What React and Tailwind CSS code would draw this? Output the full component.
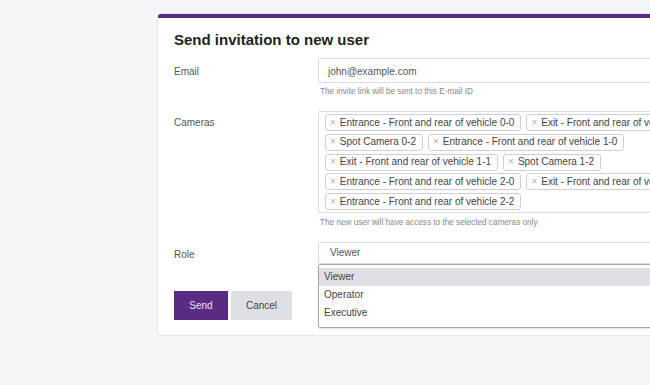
import React from "react";

const cameras = [
  "Entrance - Front and rear of vehicle 0-0",
  "Exit - Front and rear of vehicle 0-1",
  "Spot Camera 0-2",
  "Entrance - Front and rear of vehicle 1-0",
  "Exit - Front and rear of vehicle 1-1",
  "Spot Camera 1-2",
  "Entrance - Front and rear of vehicle 2-0",
  "Exit - Front and rear of vehicle 2-1",
  "Entrance - Front and rear of vehicle 2-2",
];

function Chip({ label }) {
  return (
    <div className="flex h-[17px] items-center rounded-[3px] border border-[#cfcfcf] bg-white pl-[4px] pr-[6px] text-[10px] leading-none text-[#444]">
      <span className="mr-[4px] text-[10px] text-[#b0b0b0]">×</span>
      <span className="whitespace-nowrap">{label}</span>
    </div>
  );
}

export default function App() {
  return (
    <div
      className="relative h-[385px] w-[650px] overflow-hidden bg-[#f5f6f8]"
      style={{ fontFamily: '"Liberation Sans", Arial, sans-serif' }}
    >
      <div className="ml-[158px] mt-[14px] w-[610px] rounded-[3px] border-t-4 border-[#5a2b82] bg-white shadow-[0_0_0_1px_#e6e7ea] px-[16px] pb-[15px] pt-[13px]">
        <h1 className="text-[15px] font-bold leading-[18px] text-[#222]">
          Send invitation to new user
        </h1>

        {/* Email */}
        <div className="mt-[9px] grid grid-cols-[144px_1fr]">
          <div className="flex items-center pt-[1px] text-[10px] text-[#555]">Email</div>
          <div className="flex h-[25px] items-center rounded-[2px] border border-[#dcdcdc] px-[9px] pt-[1px] text-[10px] text-[#555]">
            john@example.com
          </div>
          <div />
          <div className="mt-[3px] pl-[2px] text-[8.2px] leading-[12px] text-[#888]">
            The invite link will be sent to this E-mail ID
          </div>
        </div>

        {/* Cameras */}
        <div className="mt-[13px] grid grid-cols-[144px_1fr]">
          <div className="pt-[6px] text-[10px] leading-[12px] text-[#555]">Cameras</div>
          <div className="flex flex-wrap gap-x-[5px] gap-y-[2.75px] rounded-[2px] border border-[#dcdcdc] px-[6px] pb-[2px] pt-[2px]">
            {cameras.map((c) => (
              <Chip key={c} label={c} />
            ))}
          </div>
          <div />
          <div className="mt-[4px] pl-[2px] text-[8.2px] leading-[12px] text-[#888]">
            The new user will have access to the selected cameras only
          </div>
        </div>

        {/* Role */}
        <div className="mt-[12.5px] grid grid-cols-[144px_1fr]">
          <div className="flex items-center pt-[3px] text-[10px] text-[#555]">Role</div>
          <div className="relative">
            <div className="flex h-[22px] items-center rounded-[2px] border border-[#dcdcdc] px-[11px] text-[10px] text-[#555]">
              Viewer
            </div>
            <div className="absolute left-0 right-0 top-[22px] z-10 h-[64px] rounded-[2px] border border-[#a9a9a9] bg-white pt-[3px] text-[10px] text-[#444] shadow-[0_1px_2px_rgba(0,0,0,0.12)]">
              <div className="flex h-[18px] items-center bg-[#dfdfe5] px-[5px]">Viewer</div>
              <div className="flex h-[18px] items-center px-[5px]">Operator</div>
              <div className="flex h-[18px] items-center px-[5px]">Executive</div>
            </div>
          </div>
        </div>

        {/* Buttons */}
        <div className="mt-[27.5px] flex gap-[3px]">
          <button className="h-[29px] w-[54px] bg-[#5a2b82] text-[10px] text-[#e8e0f0]">
            Send
          </button>
          <button className="h-[29px] w-[61px] bg-[#dfe0e5] text-[10px] text-[#444]">
            Cancel
          </button>
        </div>
      </div>
    </div>
  );
}
